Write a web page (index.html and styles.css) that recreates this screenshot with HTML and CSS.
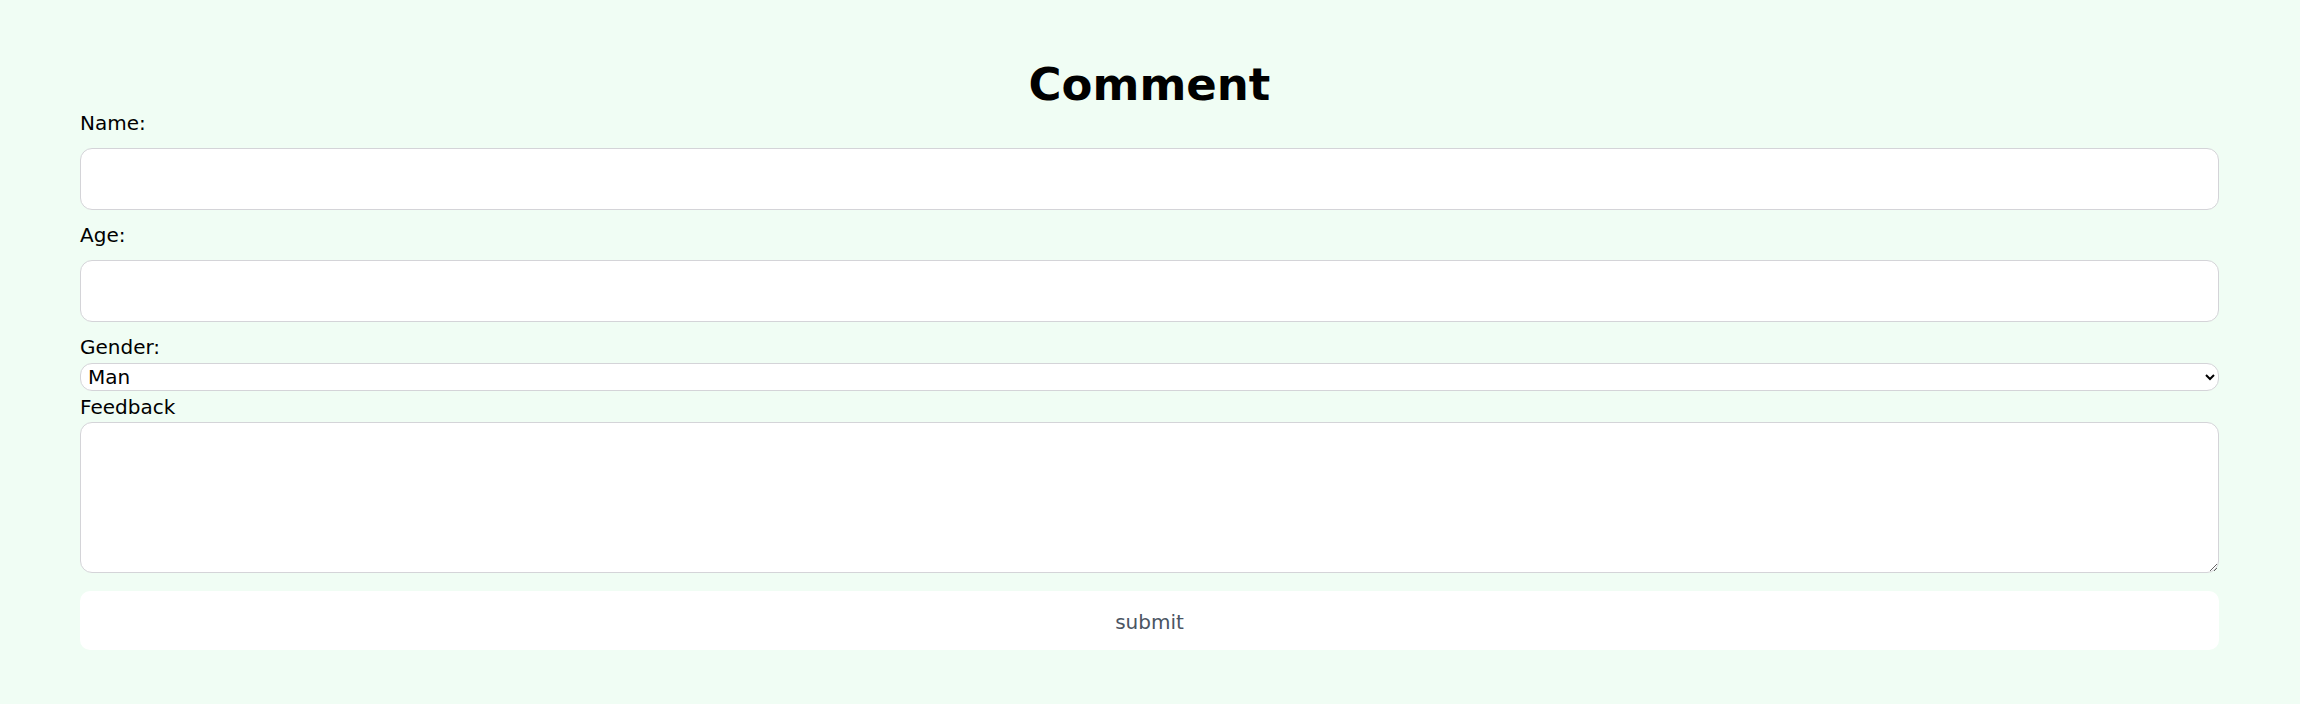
FILE: index.html
```html
<!DOCTYPE html>
<html lang="en">
<head>
<meta charset="utf-8">
<title>Comment</title>
<link rel="stylesheet" href="styles.css">
</head>
<body>
<main class="page">
  <h1 class="title">Comment</h1>
  <form class="form">
    <label class="label label-first" for="name">Name:</label>
    <input class="field" id="name" type="text">
    <label class="label" for="age">Age:</label>
    <input class="field" id="age" type="text">
    <label class="label" for="gender">Gender:</label>
    <select class="select" id="gender">
      <option>Man</option>
      <option>Woman</option>
    </select>
    <label class="label label-feedback" for="feedback">Feedback</label>
    <textarea class="textarea" id="feedback"></textarea>
    <button class="submit" type="button">submit</button>
  </form>
</main>
</body>
</html>
```

FILE: styles.css
```css
html, body {
  margin: 0;
  padding: 0;
  background: #f0fdf4;
}

body {
  font-family: "DejaVu Sans", Verdana, sans-serif;
  font-size: 20px;
  color: #000;
}

.page {
  padding: 59px 81px 0 80px;
}

.title {
  margin: 0;
  font-size: 45px;
  line-height: 52px;
  font-weight: bold;
  text-align: center;
}

.form {
  display: flex;
  flex-direction: column;
}

.label {
  display: block;
  line-height: 23px;
  margin: 0;
}

.label-first {
  margin-top: 1px;
}

.field {
  display: block;
  box-sizing: border-box;
  width: 100%;
  height: 62px;
  margin: 13px 0 14px;
  padding: 0 12px;
  border: 1px solid #d4d4d8;
  border-radius: 12px;
  background: #fff;
  font-family: inherit;
  font-size: 20px;
}

.select {
  display: block;
  box-sizing: border-box;
  width: 100%;
  height: 28px;
  margin: 4px 0 0;
  padding: 0 0 0 3px;
  border: 1px solid #d4d4d8;
  border-radius: 12px;
  background-color: #fff;
  font-family: inherit;
  font-size: 20px;
  line-height: 23px;
  color: #000;
}

.label-feedback {
  margin-top: 5px;
}

.textarea {
  display: block;
  box-sizing: border-box;
  width: 100%;
  height: 151px;
  margin: 3px 0 0;
  padding: 8px 12px;
  border: 1px solid #d4d4d8;
  border-radius: 12px;
  background: #fff;
  font-family: inherit;
  font-size: 20px;
}

.submit {
  display: block;
  width: 100%;
  height: 59px;
  margin: 18px 0 0;
  padding: 3px 0 0;
  border: none;
  border-radius: 10px;
  background: #fff;
  color: #4b5563;
  font-family: inherit;
  font-size: 20px;
  line-height: 23px;
}
```
